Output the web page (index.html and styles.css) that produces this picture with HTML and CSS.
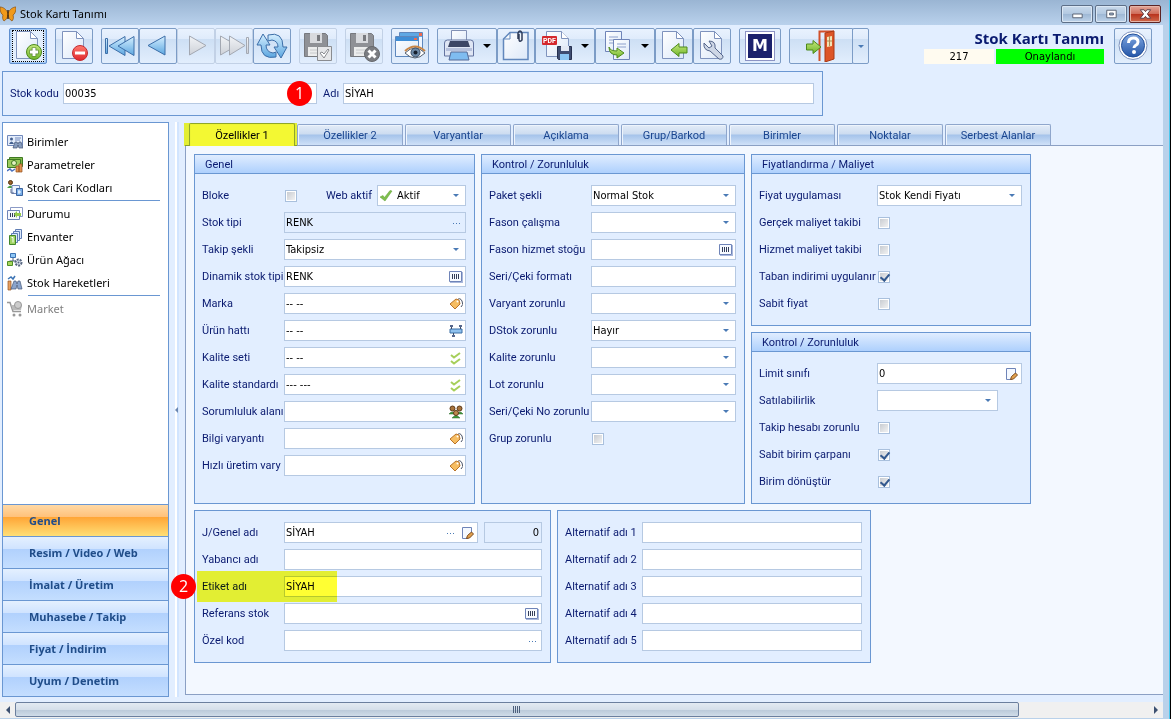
FILE: index.html
```html
<!DOCTYPE html>
<html lang="tr">
<head>
    <meta charset="UTF-8">
    <meta name="viewport" content="width=device-width, initial-scale=1.0">
    <title>Stok Kartı Tanımı</title>
    <link rel="stylesheet" href="styles.css">
</head>
<body>
    <!-- Shared icons -->
    <svg class="sprite" aria-hidden="true">
        <defs>
            <linearGradient id="gPage" x1="0" y1="0" x2="1" y2="1"><stop offset="0" stop-color="#fff"/><stop offset="1" stop-color="#dce8f8"/></linearGradient>
            <linearGradient id="gBlue" x1="0" y1="0" x2="0" y2="1"><stop offset="0" stop-color="#d5efff"/><stop offset="1" stop-color="#5ba6e0"/></linearGradient>
            <linearGradient id="gGray" x1="0" y1="0" x2="0" y2="1"><stop offset="0" stop-color="#f2f4f7"/><stop offset="1" stop-color="#cdd1d8"/></linearGradient>
            <linearGradient id="gGreen" x1="0" y1="0" x2="0" y2="1"><stop offset="0" stop-color="#c4e87c"/><stop offset="1" stop-color="#6fb52a"/></linearGradient>
            <linearGradient id="gRed" x1="0" y1="0" x2="0" y2="1"><stop offset="0" stop-color="#ff7a6e"/><stop offset="1" stop-color="#e0262c"/></linearGradient>
            <linearGradient id="gHelp" x1="0" y1="0" x2="0" y2="1"><stop offset="0" stop-color="#7fa6e0"/><stop offset="1" stop-color="#2456a8"/></linearGradient>
        </defs>
        <symbol id="page" viewBox="0 0 32 32">
            <path d="M4.500 1.500h14l7 7v20h-21z" fill="url(#gPage)" stroke="#7f93bd"/>
            <path d="M18.500 1.500v7h7z" fill="#fff" stroke="#7f93bd"/>
        </symbol>
        <symbol id="floppy" viewBox="0 0 32 32">
            <path d="M2.500 3.500h21l2 2v21h-23z" fill="#8f9196" stroke="#77797e"/>
            <path d="M8 3h12v10h-12z" fill="#d8dade"/><path d="M15 5h3v6h-3z" fill="#77797e"/>
            <path d="M6 17h16v9h-16z" fill="#eceded"/><path d="M8 20h12M8 23h12" stroke="#c8cacc"/>
        </symbol>
        <symbol id="barcode" viewBox="0 0 14 12">
            <path d="M.5 .5h12v10h-12z" fill="#f7faff" stroke="#6f84b8"/>
            <path d="M1 11.500h13M13.500 1v11" stroke="#a9b8dc"/>
            <path d="M3.500 3v5M5.500 3v5M7.500 3v5M9.500 3v5" stroke="#333d58"/>
        </symbol>
        <symbol id="tag" viewBox="0 0 14 14">
            <path d="M8 3q3-3 5 1t-1 6" fill="none" stroke="#4c5568"/>
            <path d="M1 7l6-5 3 1 1 4-5 5z" fill="#f6bd62" stroke="#b9742a"/>
            <circle cx="8.500" cy="4.500" r="1" fill="#fff"/>
        </symbol>
        <symbol id="line" viewBox="0 0 14 14">
            <path d="M1 5h12v4H1z" fill="#8fc1ee" stroke="#3b6ea5"/>
            <path d="M2.500 2v3M11.500 2v3M4.500 9v3" stroke="#3d4a66"/>
            <path d="M1 1h3v2H1zM10 1h3v2h-3zM3 11h3v2H3z" fill="#56678c"/>
        </symbol>
        <symbol id="checks" viewBox="0 0 14 14">
            <path d="M2 4l3 2.500L11 2M2 10l3 2.500L11 8" fill="none" stroke="#a6cf5a" stroke-width="2"/>
        </symbol>
        <symbol id="people" viewBox="0 0 14 14">
            <path d="M0 9q3-4 6 0zM8 9q3-4 6 0zM3 13q4-5 8 0z" fill="#3f9a3c" stroke="#2c6b2a" stroke-width=".5"/>
            <circle cx="3.500" cy="3.500" r="2.500" fill="#a8733c" stroke="#5d3a17"/>
            <circle cx="10.500" cy="3.500" r="2.500" fill="#a8733c" stroke="#5d3a17"/>
            <circle cx="7" cy="8" r="2.500" fill="#c08a50" stroke="#5d3a17"/>
        </symbol>
        <symbol id="edit" viewBox="0 0 14 14">
            <path d="M1.500 1.500h9v6l-4 5h-5z" fill="#f5f9ff" stroke="#6f84b8"/>
            <path d="M5.500 12.500l1-3 4-3.500 2 2-4 4z" fill="#e2a04c" stroke="#7a4a1e"/>
        </symbol>
        <symbol id="greenCheck" viewBox="0 0 14 14">
            <path d="M1 8l3-1.500 1.500 2L11 1.500l2 .5-7 10z" fill="#7fbf4d" stroke="#5c9c33" stroke-width=".5"/>
        </symbol>
    </svg>

    <div class="window">
        <header class="titlebar">
            <svg class="logo" viewBox="0 0 16 16">
                <path d="M8 7C6 3 3 1 0 1c0 4 1 7 3 8-1 3 0 5 1 6 2-1 4-4 4-6 0 2 2 5 4 6 1-1 2-3 1-6 2-1 3-4 3-8-3 0-6 2-8 6z" fill="#f09a1c" stroke="#8a4d0c" stroke-width=".7"/>
                <path d="M8 4v9" stroke="#4a2a0a" stroke-width="1.500"/>
            </svg>
            <span class="caption">Stok Kartı Tanımı</span>
            <div class="window-buttons">
                <button class="win-btn" aria-label="Simge durumuna küçült"><svg viewBox="0 0 30 17"><path d="M10.500 8.500h10v4h-10z" fill="#fff" stroke="#555f70"/></svg></button>
                <button class="win-btn" aria-label="Ekranı kapla"><svg viewBox="0 0 30 17"><path d="M10.500 4.500h10v8h-10z" fill="#fff" stroke="#555f70"/><path d="M13.500 7.500h4v2h-4z" fill="#9fb6d0" stroke="#555f70"/></svg></button>
                <button class="win-btn close" aria-label="Kapat"><svg viewBox="0 0 30 17"><path d="M10 4h4l1.500 2L17 4h4l-3.500 4.500L21 13h-4l-1.500-2-1.500 2h-4l3.500-4.500z" fill="#fff" stroke="#5a3a44"/></svg></button>
            </div>
        </header>

        <div class="toolbar">
            <div class="group">
                <button class="tool focused" aria-label="Yeni">
                    <svg viewBox="0 0 32 32"><use href="#page"/><circle cx="22" cy="22" r="7.500" fill="url(#gGreen)" stroke="#4d8a1c"/><path d="M22 17.500v9M17.500 22h9" stroke="#557f35" stroke-width="4.500"/><path d="M22 18v8M18 22h8" stroke="#fff" stroke-width="3"/></svg>
                </button>
            </div>
            <div class="group">
                <button class="tool" aria-label="Sil">
                    <svg viewBox="0 0 32 32"><use href="#page"/><circle cx="22" cy="23" r="7.500" fill="url(#gRed)" stroke="#c22a30"/><path d="M17 23h10" stroke="#fff" stroke-width="3"/></svg>
                </button>
            </div>
            <div class="group">
                <button class="tool" aria-label="İlk kayıt">
                    <svg viewBox="0 0 32 32"><g fill="url(#gBlue)" stroke="#3c6ea8"><path d="M1.500 8.500h2v15h-2z"/><path d="M5 16l16-9.500v19z"/><path d="M14 16l16-9.500v19z"/></g></svg>
                </button>
                <button class="tool" aria-label="Önceki kayıt">
                    <svg viewBox="0 0 32 32"><path d="M6 15.500l17-9.500v19z" fill="url(#gBlue)" stroke="#3c6ea8"/></svg>
                </button>
                <button class="tool off" aria-label="Sonraki kayıt">
                    <svg viewBox="0 0 32 32"><path d="M26 15.500L9.500 6v19z" fill="url(#gGray)" stroke="#a3a8b2"/></svg>
                </button>
                <button class="tool off" aria-label="Son kayıt">
                    <svg viewBox="0 0 32 32"><g fill="url(#gGray)" stroke="#a3a8b2"><path d="M19 15.500L2.500 6v19z"/><path d="M27 15.500L11.500 6v19z"/><path d="M28.500 7.500h2v16h-2z"/></g></svg>
                </button>
                <button class="tool" aria-label="Yenile">
                    <svg viewBox="0 0 32 32"><g fill="url(#gBlue)" stroke="#3c6ea8"><path d="M7 4l7 11h-4q0 7 7 8l3-1v5q-15 3-15-12H1z"/><path d="M25 28l-7-11h4q0-6-6-7l-4 1V5q15-4 15 12h4z"/></g></svg>
                </button>
            </div>
            <div class="group">
                <button class="tool off" aria-label="Kaydet">
                    <svg viewBox="0 0 32 32"><use href="#floppy"/><path d="M15.500 16.500h14v14h-14z" fill="#e6e7e9" stroke="#8a8c90"/><path d="M18 23l2-1 2 2 4-5 1 1-5 8z" fill="#fff" stroke="#8a8c90"/></svg>
                </button>
            </div>
            <div class="group">
                <button class="tool off" aria-label="Vazgeç">
                    <svg viewBox="0 0 32 32"><use href="#floppy"/><circle cx="24" cy="24" r="7.500" fill="#7b7d82" stroke="#66686c"/><path d="M20.500 20.500l7 7M27.500 20.500l-7 7" stroke="#fff" stroke-width="3"/></svg>
                </button>
            </div>
            <div class="group">
                <button class="tool" aria-label="İzle">
                    <svg viewBox="0 0 32 32"><path d="M5.500 2.500h23v19h-23z" fill="#eef5ff" stroke="#5d87bd"/><path d="M6 3h22v4H6z" fill="#5fa8e4"/><path d="M25 3h3v3h-3z" fill="#ef6a4d"/><path d="M1.500 6.500h23v20h-23z" fill="url(#gPage)" stroke="#5d87bd"/><path d="M2 7h22v4H2z" fill="#3f8ed6"/><path d="M20 8h3v2h-3z" fill="#ef6a4d"/><path d="M11 23q10-10 20 0-10 10-20 0z" fill="#fff" stroke="#54606f"/><path d="M11 21q10-9 20 0" fill="none" stroke="#c98544" stroke-width="2"/><circle cx="21.500" cy="22.500" r="4.500" fill="#6d8aa8" stroke="#3c5068"/><circle cx="21.500" cy="22.500" r="2" fill="#16202e"/></svg>
                </button>
            </div>
            <div class="group">
                <button class="tool with-arrow" aria-label="Yazdır">
                    <svg viewBox="0 0 32 32"><path d="M8.500 .5h15v14h-15z" fill="url(#gPage)" stroke="#8291b5"/><path d="M1.500 13q0-3 3-3h23q3 0 3 3v13h-29z" fill="#dfe6f4" stroke="#6474a0"/><path d="M7 11h18l2 6H5z" fill="#3c4665"/><path d="M3 18h26v3H3z" fill="#b6c1dc"/><path d="M8 22h16l2 8H6z" fill="#7fbcf0" stroke="#566b98"/></svg>
                    <span class="arrow"></span>
                </button>
                <button class="tool" aria-label="Ekler">
                    <svg viewBox="0 0 32 32"><path d="M10 2.500h18v27H3.500V9z" fill="url(#gPage)" stroke="#6288bd" stroke-width="1.500"/><path d="M10 2.500V9H3.500" fill="none" stroke="#6288bd"/><path d="M18 9V3q2-4 4 0v7q-3 3-3-1V4" fill="none" stroke="#2f3c58" stroke-width="1.500"/></svg>
                </button>
                <button class="tool with-arrow" aria-label="PDF kaydet">
                    <svg viewBox="0 0 32 32"><path d="M5.500 1.500h15l7 7v18h-22z" fill="url(#gPage)" stroke="#7f93bd"/><path d="M20.500 1.500v7h7" fill="#fff" stroke="#7f93bd"/><rect x="1" y="6" width="15" height="9" rx="1" fill="#d4282d"/><text x="2" y="13" class="pdf">PDF</text><path d="M16.500 16.500h14v13h-13l-1-1z" fill="#3f4d70" stroke="#27314f"/><path d="M20 16h8v5h-8z" fill="#e3e9f4"/><path d="M19 24h9v6h-9z" fill="#8cc6f2"/></svg>
                    <span class="arrow"></span>
                </button>
                <button class="tool with-arrow" aria-label="Kopyala">
                    <svg viewBox="0 0 32 32"><path d="M4.500 1.500h16v20h-16z" fill="url(#gPage)" stroke="#6f84b8"/><path d="M8 7h9M8 10h7M8 13h5" stroke="#8da0cc"/><path d="M12.500 9.500h16v20h-16z" fill="url(#gPage)" stroke="#6f84b8"/><path d="M16 14h9M16 17h9" stroke="#8da0cc"/><path d="M8 17q1 4 8 4v-3l7 5-7 5v-3q-8 0-8-8z" fill="url(#gGreen)" stroke="#4d8a1c"/></svg>
                    <span class="arrow"></span>
                </button>
                <button class="tool" aria-label="İçe aktar">
                    <svg viewBox="0 0 32 32"><use href="#page"/><path d="M13 20l8-6.500V17h8v6h-8v3.500z" fill="url(#gGreen)" stroke="#4d8a1c"/></svg>
                </button>
                <button class="tool" aria-label="Araçlar">
                    <svg viewBox="0 0 32 32"><use href="#page"/><path d="M8 13q-1 7 6 8l9 8q4 1 4-3l-8-8q1-7-6-7l3 5-3 2z" fill="#ced7e6" stroke="#56678c"/></svg>
                </button>
            </div>
            <div class="group">
                <button class="tool letter" aria-label="Market"><span>M</span></button>
            </div>
            <div class="group">
                <button class="tool exit" aria-label="Çıkış">
                    <svg viewBox="0 0 32 32"><path d="M14.500 31V1.500H29" fill="none" stroke="#d2502a" stroke-width="2"/><path d="M20 3l9-2v28l-9 3z" fill="#dd5527" stroke="#a83a16"/><path d="M22 7l5-1v10l-5 1z" fill="#f2e3b4"/><path d="M24.500 6v10M22 11h5" stroke="#b08a50"/><path d="M16 17l-8 6.500V20H1.500v-6H8v-3.500z" fill="url(#gGreen)" stroke="#4d8a1c"/></svg>
                </button>
                <button class="tool drop" aria-label="Çıkış seçenekleri"><span class="arrow small"></span></button>
            </div>
            <div class="status">
                <h1>Stok Kartı Tanımı</h1>
                <div class="status-row">
                    <span class="record-no">217</span>
                    <span class="approved">Onaylandı</span>
                </div>
            </div>
            <button class="tool" aria-label="Yardım">
                <svg viewBox="0 0 32 32"><circle cx="16" cy="15.500" r="14" fill="#fff" stroke="#7f93bd"/><circle cx="16" cy="15.500" r="11.500" fill="url(#gHelp)" stroke="#24509a"/><path d="M11.500 13q0-5 5-5 4.500 0 4.500 4 0 2-2.500 3.500Q17 16.500 17 18" fill="none" stroke="#fff" stroke-width="3"/><circle cx="17" cy="22" r="2" fill="#fff"/></svg>
            </button>
        </div>

        <div class="lookup">
            <label for="stokKodu" class="code-label">Stok kodu</label>
            <div class="field code"><input type="text" id="stokKodu" value="00035"><span class="badge first">1</span></div>
            <label for="adi" class="name-label">Adı</label>
            <div class="field"><input type="text" id="adi" value="SİYAH"></div>
        </div>

        <main class="main">
            <aside class="sidebar">
                <nav class="links">
                    <a href="#"><svg viewBox="0 0 16 16"><path d="M.5 1.500h15v10H.5z" fill="#e4edfb" stroke="#7088bb"/><circle cx="4.500" cy="5" r="1.500" fill="#44608f"/><path d="M2 10q2.500-5 5 0z" fill="#44608f"/><path d="M8 4h6M8 6h5" stroke="#7088bb"/><path d="M6 14l2-6h2l1 2 1-2h2l2 6h-4l-1-3-1 3z" fill="#879cbd" stroke="#465879" stroke-width=".7"/></svg>Birimler</a>
                    <a href="#"><svg viewBox="0 0 16 16"><path d="M2.500 .5h13v9h-13z" fill="#7fb84a" stroke="#3f7a22"/><path d="M.5 2.500h13v8H.5z" fill="#9ccc5e" stroke="#3f7a22"/><circle cx="7" cy="6" r="2.500" fill="#e3f2c0" stroke="#3f7a22"/><path d="M0 14l3-2 2 2 3-2" fill="none" stroke="#4a72c0" stroke-width="1.500"/><path d="M9 9h3v6H9zM12 7h3v8h-3z" fill="#e29350" stroke="#93501f" stroke-width=".7"/></svg>Parametreler</a>
                    <a href="#"><svg viewBox="0 0 16 16"><circle cx="3.500" cy="2.500" r="2" fill="#9a602c" stroke="#54330f"/><path d="M0 8q3.500-5 7 0z" fill="#4ba045"/><path d="M5 5.500h7.500v8H5z" fill="#eef4ff" stroke="#7088bb"/><path d="M4 9v4h3" fill="none" stroke="#5f6f90"/><path d="M9.500 8.500h6v7h-6z" fill="#79aee8" stroke="#3d649f"/><path d="M12 10v4M11 12h3" stroke="#fff"/></svg>Stok Cari Kodları</a>
                    <hr>
                    <a href="#"><svg viewBox="0 0 16 16"><path d="M3.500 1.500h12v9h-12z" fill="#fff" stroke="#8b9ac6"/><path d="M.5 4.500h12v9H.5z" fill="#f4f8ff" stroke="#6f84b8"/><path d="M3.500 7v4M5.500 7v4M7.500 7v4" stroke="#333d58"/><path d="M7 8l3-3v2h4v3h-4v2z" fill="#94cc4c"/></svg>Durumu</a>
                    <a href="#"><svg viewBox="0 0 16 16"><g fill="#dce9fb" stroke="#5f7db4"><path d="M8.500 .5h6v9h-6z"/><path d="M6.500 2.500h6v9h-6z"/><path d="M4.500 4.500h6v9h-6z"/></g><path d="M2.500 6.500h6v9h-6z" fill="#9fd362" stroke="#43872a"/><path d="M4.500 8.500h1.500v5" fill="none" stroke="#fff"/></svg>Envanter</a>
                    <a href="#"><svg viewBox="0 0 16 16"><path d="M3.500 1.500h5v4h-5z" fill="#8ec6f5" stroke="#3b73b4"/><path d="M6 6v3M2.500 9h7" stroke="#4d5c78"/><path d="M.5 9.500h5v4h-5z" fill="#a8d65e" stroke="#4f8e26"/><circle cx="11.500" cy="10.500" r="3" fill="#dfe5f0" stroke="#56657f" stroke-width="2" stroke-dasharray="2 1"/><circle cx="11.500" cy="10.500" r="1" fill="#56657f"/></svg>Ürün Ağacı</a>
                    <a href="#"><svg viewBox="0 0 16 16"><path d="M1 4l3-2 2 2 2-3" fill="none" stroke="#3b73b4" stroke-width="1.500"/><path d="M1 6h3v9H1z" fill="#e8a060" stroke="#93501f" stroke-width=".7"/><path d="M4 14l3-8h2l1 3 1-3h2l2 8h-4l-1-4-1 4z" fill="#8aa4cc" stroke="#465879" stroke-width=".7"/></svg>Stok Hareketleri</a>
                    <hr>
                    <a href="#" class="muted"><svg viewBox="0 0 16 16"><path d="M0 1.500h3l3 9h8" fill="none" stroke="#999" stroke-width="1.500"/><path d="M4 4h11l-1 5H6z" fill="#bbb"/><circle cx="11" cy="4" r="3.500" fill="#ccc" stroke="#999"/><circle cx="7" cy="14" r="1.500" fill="#999"/><circle cx="13" cy="14" r="1.500" fill="#999"/></svg>Market</a>
                </nav>
                <div class="sections">
                    <button class="selected">Genel</button>
                    <button>Resim / Video / Web</button>
                    <button>İmalat / Üretim</button>
                    <button>Muhasebe / Takip</button>
                    <button>Fiyat / İndirim</button>
                    <button>Uyum / Denetim</button>
                </div>
            </aside>

            <div class="splitter"></div>

            <section class="content">
                <div class="tabs">
                    <button class="tab active">Özellikler 1</button>
                    <button class="tab">Özellikler 2</button>
                    <button class="tab">Varyantlar</button>
                    <button class="tab">Açıklama</button>
                    <button class="tab">Grup/Barkod</button>
                    <button class="tab">Birimler</button>
                    <button class="tab">Noktalar</button>
                    <button class="tab">Serbest Alanlar</button>
                </div>

                <div class="tab-body">
                    <div class="panels">
                        <div class="panel general">
                            <h2>Genel</h2>
                            <div class="form">
                                <div class="row">
                                    <label for="bloke">Bloke</label>
                                    <input type="checkbox" id="bloke">
                                    <label for="webAktif" class="inline">Web aktif</label>
                                    <div class="field select web"><svg class="lead"><use href="#greenCheck"/></svg><select id="webAktif"><option>Aktif</option></select></div>
                                </div>
                                <div class="row"><label for="stokTipi">Stok tipi</label><div class="field readonly"><input type="text" id="stokTipi" value="RENK" readonly><button class="dots" aria-label="Seç"></button></div></div>
                                <div class="row"><label for="takip">Takip şekli</label><div class="field select"><select id="takip"><option>Takipsiz</option></select></div></div>
                                <div class="row"><label for="dinamik">Dinamik stok tipi</label><div class="field"><input type="text" id="dinamik" value="RENK"><button class="pick" aria-label="Seç"><svg><use href="#barcode"/></svg></button></div></div>
                                <div class="row"><label for="marka">Marka</label><div class="field"><input type="text" id="marka" value="-- --"><button class="pick" aria-label="Seç"><svg><use href="#tag"/></svg></button></div></div>
                                <div class="row"><label for="urunHatti">Ürün hattı</label><div class="field"><input type="text" id="urunHatti" value="-- --"><button class="pick" aria-label="Seç"><svg><use href="#line"/></svg></button></div></div>
                                <div class="row"><label for="kaliteSeti">Kalite seti</label><div class="field"><input type="text" id="kaliteSeti" value="-- --"><button class="pick" aria-label="Seç"><svg><use href="#checks"/></svg></button></div></div>
                                <div class="row"><label for="kaliteStd">Kalite standardı</label><div class="field"><input type="text" id="kaliteStd" value="--- ---"><button class="pick" aria-label="Seç"><svg><use href="#checks"/></svg></button></div></div>
                                <div class="row"><label for="sorumluluk">Sorumluluk alanı</label><div class="field"><input type="text" id="sorumluluk"><button class="pick" aria-label="Seç"><svg><use href="#people"/></svg></button></div></div>
                                <div class="row"><label for="bilgi">Bilgi varyantı</label><div class="field"><input type="text" id="bilgi"><button class="pick" aria-label="Seç"><svg><use href="#tag"/></svg></button></div></div>
                                <div class="row"><label for="hizli">Hızlı üretim vary</label><div class="field"><input type="text" id="hizli"><button class="pick" aria-label="Seç"><svg><use href="#tag"/></svg></button></div></div>
                            </div>
                        </div>

                        <div class="panel control">
                            <h2>Kontrol / Zorunluluk</h2>
                            <div class="form">
                                <div class="row"><label for="paket">Paket şekli</label><div class="field select"><select id="paket"><option>Normal Stok</option></select></div></div>
                                <div class="row"><label for="fason">Fason çalışma</label><div class="field select"><select id="fason"><option></option></select></div></div>
                                <div class="row"><label for="fasonStok">Fason hizmet stoğu</label><div class="field"><input type="text" id="fasonStok"><button class="pick" aria-label="Seç"><svg><use href="#barcode"/></svg></button></div></div>
                                <div class="row"><label for="seriFormat">Seri/Çeki formatı</label><div class="field"><input type="text" id="seriFormat"></div></div>
                                <div class="row"><label for="varyant">Varyant zorunlu</label><div class="field select"><select id="varyant"><option></option></select></div></div>
                                <div class="row"><label for="dstok">DStok zorunlu</label><div class="field select"><select id="dstok"><option>Hayır</option></select></div></div>
                                <div class="row"><label for="kalite">Kalite zorunlu</label><div class="field select"><select id="kalite"><option></option></select></div></div>
                                <div class="row"><label for="lot">Lot zorunlu</label><div class="field select"><select id="lot"><option></option></select></div></div>
                                <div class="row"><label for="seriNo">Seri/Çeki No zorunlu</label><div class="field select"><select id="seriNo"><option></option></select></div></div>
                                <div class="row"><label for="grup">Grup zorunlu</label><input type="checkbox" id="grup"></div>
                            </div>
                        </div>

                        <div class="stack">
                            <div class="panel pricing">
                                <h2>Fiyatlandırma / Maliyet</h2>
                                <div class="form">
                                    <div class="row"><label for="fiyat">Fiyat uygulaması</label><div class="field select"><select id="fiyat"><option>Stok Kendi Fiyatı</option></select></div></div>
                                    <div class="row"><label for="gercek">Gerçek maliyet takibi</label><input type="checkbox" id="gercek"></div>
                                    <div class="row"><label for="hizmet">Hizmet maliyet takibi</label><input type="checkbox" id="hizmet"></div>
                                    <div class="row"><label for="taban">Taban indirimi uygulanır</label><input type="checkbox" id="taban" checked></div>
                                    <div class="row"><label for="sabitFiyat">Sabit fiyat</label><input type="checkbox" id="sabitFiyat"></div>
                                </div>
                            </div>
                            <div class="panel pricing">
                                <h2>Kontrol / Zorunluluk</h2>
                                <div class="form">
                                    <div class="row"><label for="limit">Limit sınıfı</label><div class="field"><input type="text" id="limit" value="0"><button class="pick" aria-label="Düzenle"><svg><use href="#edit"/></svg></button></div></div>
                                    <div class="row"><label for="satilabilir">Satılabilirlik</label><div class="field select short"><select id="satilabilir"><option></option></select></div></div>
                                    <div class="row"><label for="hesap">Takip hesabı zorunlu</label><input type="checkbox" id="hesap"></div>
                                    <div class="row"><label for="carpan">Sabit birim çarpanı</label><input type="checkbox" id="carpan" checked></div>
                                    <div class="row"><label for="donustur">Birim dönüştür</label><input type="checkbox" id="donustur" checked></div>
                                </div>
                            </div>
                        </div>
                    </div>

                    <div class="panels">
                        <div class="panel names">
                            <div class="form">
                                <div class="row"><label for="genelAdi">J/Genel adı</label><div class="field"><input type="text" id="genelAdi" value="SİYAH"><button class="dots" aria-label="Seç"></button><button class="pick" aria-label="Düzenle"><svg><use href="#edit"/></svg></button></div><div class="field readonly count"><input type="text" value="0" aria-label="Adet" readonly></div></div>
                                <div class="row"><label for="yabanci">Yabancı adı</label><div class="field"><input type="text" id="yabanci"></div></div>
                                <div class="row marked"><label for="etiket">Etiket adı</label><div class="field"><input type="text" id="etiket" value="SİYAH"></div><span class="badge second">2</span></div>
                                <div class="row"><label for="referans">Referans stok</label><div class="field"><input type="text" id="referans"><button class="pick" aria-label="Seç"><svg><use href="#barcode"/></svg></button></div></div>
                                <div class="row"><label for="ozelKod">Özel kod</label><div class="field"><input type="text" id="ozelKod"><button class="dots" aria-label="Seç"></button></div></div>
                            </div>
                        </div>
                        <div class="panel alternates">
                            <div class="form">
                                <div class="row"><label for="alt1">Alternatif adı 1</label><div class="field"><input type="text" id="alt1"></div></div>
                                <div class="row"><label for="alt2">Alternatif adı 2</label><div class="field"><input type="text" id="alt2"></div></div>
                                <div class="row"><label for="alt3">Alternatif adı 3</label><div class="field"><input type="text" id="alt3"></div></div>
                                <div class="row"><label for="alt4">Alternatif adı 4</label><div class="field"><input type="text" id="alt4"></div></div>
                                <div class="row"><label for="alt5">Alternatif adı 5</label><div class="field"><input type="text" id="alt5"></div></div>
                            </div>
                        </div>
                    </div>
                </div>
            </section>
        </main>

        <div class="scrollbar">
            <button class="scroll-left" aria-label="Sola kaydır"></button>
            <div class="track"><div class="thumb"><span class="grip"></span></div></div>
            <button class="scroll-right" aria-label="Sağa kaydır"></button>
        </div>
    </div>
</body>
</html>
```
FILE: styles.css
```css
* {
    box-sizing: border-box;
}
body {
    margin: 0;
    font-family: Roboto, sans-serif;
    font-size: 11px;
    color: #0a1a70;
    background: #e2eeff;
    border-right: 1px solid #000;
}
button, input, select {
    font: inherit;
    color: inherit;
    margin: 0;
    padding: 0;
    border: 0;
    border-radius: 0;
    background: none;
}
h1, h2 {
    margin: 0;
    font-weight: normal;
}
.sprite {
    position: absolute;
    width: 0;
    height: 0;
}
.window {
    display: flex;
    flex-direction: column;
    min-height: 100vh;
    padding-right: 6px;
    border-right: 1px solid #4cc8ee;
    background: linear-gradient(to right, #e2eeff calc(100% - 6px), #b9d1ea calc(100% - 6px));
}

/* Title bar */
.titlebar {
    display: flex;
    align-items: center;
    height: 25px;
    margin-right: -6px;
    padding: 2px 8px 0 0;
    background: linear-gradient(#9ab5d3, #b9d1ec);
    color: #000;
    font-family: "Noto Sans", sans-serif;
}
.logo {
    width: 16px;
    height: 16px;
    margin-right: 4px;
}
.window-buttons {
    display: flex;
    gap: 2px;
    margin-left: auto;
}
.win-btn {
    width: 32px;
    height: 18px;
    border: 1px solid #5d6f88;
    border-radius: 2px;
    background: linear-gradient(#c9daec, #b2c8e0 50%, #9db7d4 50%, #bdd3ea);
    box-shadow: inset 0 0 0 1px #dbe7f4;
}
.win-btn svg {
    display: block;
    width: 30px;
    height: 16px;
}
.win-btn.close {
    border-color: #5c2424;
    background: linear-gradient(#e3a699, #cf6b58 50%, #b8311c 50%, #cf6a4c);
    box-shadow: inset 0 0 0 1px #e6b5a8;
}

/* Toolbar */
.toolbar {
    display: flex;
    align-items: flex-start;
    height: 46px;
    padding: 3px 11px 0 9px;
}
.group {
    display: flex;
    margin-right: 8px;
}
.tool {
    display: flex;
    flex: none;
    align-items: center;
    justify-content: center;
    width: 38px;
    height: 36px;
    border: 1px solid #7c9cc6;
    border-radius: 2px;
    background: linear-gradient(#e9f2fe, #dfebfb 30%, #cddff4 30%, #e2eefd);
}
.tool svg {
    width: 32px;
    height: 32px;
}
.tool.focused {
    border-color: #5f8fcf;
    background: #c5dcf8;
    box-shadow: inset 0 0 0 1px #a8cbf3;
}
.tool.focused svg {
    outline: 1px dotted #000;
    outline-offset: -1px;
    background: #e2eefd;
}
.tool.off {
    border-color: #c2d1e6;
}
.tool.with-arrow {
    width: 60px;
    gap: 8px;
}
.tool.letter {
    width: 42px;
}
.letter span {
    width: 30px;
    height: 30px;
    border: 1px solid #8c93c4;
    background: #1b216c;
    box-shadow: inset 0 0 0 2px #fff;
    color: #fff;
    font-family: "DejaVu Sans", sans-serif;
    font-size: 16px;
    font-weight: bold;
    line-height: 28px;
}
.tool.exit {
    width: 64px;
    border-radius: 2px 0 0 2px;
}
.tool.drop {
    width: 17px;
    margin-left: -1px;
}
.arrow {
    border: 4px solid transparent;
    border-top-color: #000;
    border-bottom: 0;
}
.arrow.small {
    border-width: 3px 3px 0;
    border-top-color: #4a7ab5;
}
.pdf {
    fill: #fff;
    font-size: 7px;
    font-weight: bold;
}
.status {
    display: flex;
    flex-direction: column;
    width: 180px;
    margin-left: auto;
    margin-right: 10px;
}
.status h1 {
    height: 21px;
    font-family: "Open Sans", sans-serif;
    font-size: 15px;
    font-weight: bold;
    line-height: 21px;
    text-align: right;
    white-space: nowrap;
}
.status-row {
    display: flex;
    gap: 2px;
    color: #000;
    font-family: "DejaVu Sans", sans-serif;
    font-size: 10px;
    line-height: 15px;
    text-align: center;
}
.record-no {
    width: 70px;
    background: #fffbf0;
}
.approved {
    flex: 1;
    background: #0f0;
}

/* Stock code lookup */
.lookup {
    display: flex;
    align-items: center;
    max-width: 821px;
    height: 45px;
    margin-left: 2px;
    padding: 0 8px 0 7px;
    border: 1px solid #6a97d2;
}
.code-label {
    width: 53px;
}
.name-label {
    width: 20px;
}
.lookup .code {
    flex: none;
    position: relative;
    width: 254px;
    margin-right: 6px;
}

/* Fields */
.field {
    display: flex;
    flex: 1;
    align-items: center;
    min-width: 0;
    height: 21px;
    border: 1px solid #b6c9e2;
    background: #fff;
    color: #000;
    font-family: "DejaVu Sans Condensed", "DejaVu Sans", sans-serif;
}
.field input {
    flex: 1;
    min-width: 0;
    height: 19px;
    padding-left: 1px;
    outline: 0;
}
.field select {
    flex: 1;
    min-width: 0;
    height: 19px;
    padding-left: 1px;
    appearance: none;
    outline: 0;
}
.field.select::after {
    content: "";
    margin: 0 6px 0 3px;
    border: 3px solid transparent;
    border-top-color: #4a7ab5;
    border-bottom: 0;
    pointer-events: none;
}
.field.readonly {
    background: #e2eeff;
}
.field.web {
    flex: none;
    width: 89px;
}
.field.short {
    flex: none;
    width: 121px;
}
.field.count {
    flex: none;
    width: 58px;
    margin-left: 6px;
}
.field.count input {
    padding-right: 2px;
    text-align: right;
}
.lead {
    width: 14px;
    height: 14px;
    margin: 0 3px 0 1px;
}
.pick {
    width: 14px;
    height: 14px;
    margin-right: 2px;
}
.pick svg {
    display: block;
    width: 14px;
    height: 14px;
}
.dots {
    width: 16px;
    height: 16px;
    background: linear-gradient(to right, #4a7ab5 1px, transparent 1px) 4px 8px / 3px 1px repeat-x;
    background-clip: content-box;
    padding: 0 4px;
}
.dots + .pick {
    margin-left: 2px;
}
input[type="checkbox"] {
    width: 12px;
    height: 12px;
    margin: 1px 0 0 1px;
    border: 1px solid #a9c0dd;
    background: linear-gradient(135deg, #c4c8ce, #f6f6f6);
    box-shadow: inset 0 0 0 1px #fff;
    appearance: none;
}
input[type="checkbox"]:checked::before {
    content: "";
    display: block;
    width: 4px;
    height: 7px;
    margin: 0 0 0 3px;
    border: solid #33598f;
    border-width: 0 2px 2px 0;
    transform: rotate(40deg);
}

/* Sidebar */
.main {
    display: flex;
    flex: 1;
    margin: 6px 0 5px 2px;
}
.sidebar {
    display: flex;
    flex: none;
    flex-direction: column;
    width: 167px;
    border: 1px solid #6a97d2;
    background: #fff;
}
.links {
    display: flex;
    flex: 1;
    flex-direction: column;
    padding: 7px 8px 0 4px;
    font-family: "Noto Sans", sans-serif;
}
.links a {
    display: flex;
    align-items: center;
    gap: 4px;
    height: 23px;
    color: #000;
    text-decoration: none;
    white-space: nowrap;
}
.links a svg {
    width: 16px;
    height: 16px;
}
.links a.muted {
    color: #808080;
}
.links hr {
    width: 132px;
    height: 1px;
    margin: 1px 0 1px 21px;
    border: 0;
    background: #6a97d2;
}
.sections button {
    display: block;
    width: 100%;
    height: 32px;
    padding-left: 26px;
    border-top: 1px solid #6a97d2;
    background: linear-gradient(#e4f0ff, #cfe3ff 40%, #b1d1fd 40%, #c4deff);
    color: #204d89;
    font-family: "Open Sans", sans-serif;
    font-weight: bold;
    text-align: left;
}
.sections .selected {
    background: linear-gradient(#ffd9a5, #ffc078 40%, #ffa637 40%, #ffdf76);
}
.splitter {
    display: flex;
    flex: none;
    align-items: center;
    width: 16px;
    padding-left: 6px;
    background: linear-gradient(to right, transparent 6px, #fff 6px, #fff 8px, #d2e5ff 8px, #d2e5ff 10px, transparent 10px);
}
.splitter::after {
    content: "";
    border: 3px solid transparent;
    border-right-color: #6a86b0;
    border-left: 0;
}

/* Tabs */
.content {
    display: flex;
    flex: 1;
    flex-direction: column;
    min-width: 0;
    margin-bottom: 2px;
}
.tabs {
    position: relative;
    display: flex;
    gap: 2px;
    height: 24px;
    padding: 2px 0 0 4px;
    border-bottom: 1px solid #8ba0c4;
}
.tabs::after {
    content: "";
    position: absolute;
    top: 1px;
    left: -1px;
    width: 113px;
    height: 23px;
    background: #ffff33;
    mix-blend-mode: multiply;
    pointer-events: none;
}
.tab {
    width: 106px;
    height: 21px;
    border: 1px solid #8fa6cc;
    border-bottom: 0;
    border-radius: 2px 2px 0 0;
    background: linear-gradient(#e3ecf8, #cddcf0 45%, #a5c3ea 50%, #cfe1f8);
    box-shadow: inset 1px 1px 0 #eef4fc;
    color: #1a458f;
}
.tab.active {
    height: 23px;
    margin-top: -1px;
    background: #f3f8ff;
    color: #000;
}
.tab-body {
    display: flex;
    flex: 1;
    flex-direction: column;
    gap: 6px;
    padding: 8px;
    border: 1px solid #8ba0c4;
    border-top: 0;
    border-right: 0;
    background: #f3f8ff;
}

/* Panels */
.panels {
    display: flex;
    gap: 6px;
}
.stack {
    display: flex;
    flex-direction: column;
    gap: 6px;
}
.panel {
    flex: none;
    border: 1px solid #6a97d2;
    background: #e2eeff;
}
.panel h2 {
    height: 19px;
    padding-left: 10px;
    border-bottom: 1px solid #6a97d2;
    background: linear-gradient(#e0edff, #aed0fd);
    font-size: 11px;
    line-height: 19px;
}
.general {
    width: 281px;
}
.control {
    width: 264px;
}
.pricing {
    width: 280px;
}
.names {
    width: 357px;
}
.alternates {
    width: 314px;
}
.form {
    display: flex;
    flex-direction: column;
    gap: 6px;
    padding: 11px 8px 11px 7px;
}
.row {
    display: flex;
    align-items: center;
    height: 21px;
}
.row label {
    flex: none;
    width: 82px;
    white-space: nowrap;
}
.control .row label {
    width: 102px;
}
.pricing .row label {
    width: 118px;
}
.alternates .row label {
    width: 77px;
}
.row label.inline {
    width: auto;
    margin: 0 5px 0 auto;
}

/* Highlight and step numbers */
.row.marked {
    position: relative;
}
.row.marked::before {
    content: "";
    position: absolute;
    z-index: 1;
    top: -5px;
    left: -5px;
    width: 140px;
    height: 31px;
    background: #ffff33;
    mix-blend-mode: multiply;
    pointer-events: none;
}
.badge {
    position: absolute;
    z-index: 2;
    width: 25px;
    height: 25px;
    border-radius: 50%;
    background: #f00;
    color: #fff;
    font-family: "Open Sans", sans-serif;
    font-size: 16px;
    line-height: 25px;
    text-align: center;
}
.badge.first {
    top: -3px;
    right: 4px;
}
.badge.second {
    top: -2px;
    left: -31px;
}

/* Horizontal scroll bar */
.scrollbar {
    display: flex;
    height: 17px;
    border-bottom: 1px solid #b9d1ea;
    background: #f0f0f0;
}
.scrollbar button {
    display: flex;
    align-items: center;
    justify-content: center;
    flex: none;
    width: 15px;
}
.scrollbar button::before {
    content: "";
    border: 4px solid transparent;
}
.scrollbar .scroll-left::before {
    border-right-color: #3c5070;
    border-left: 0;
}
.scrollbar .scroll-right::before {
    border-left-color: #3c5070;
    border-right: 0;
}
.track {
    flex: 1;
}
.thumb {
    display: flex;
    align-items: center;
    justify-content: center;
    width: 88.6%;
    height: 15px;
    border: 1px solid #6b7f9e;
    border-radius: 2px;
    background: linear-gradient(#e3eaf2, #d5dfea 50%, #b9c8d8 50%, #d0dce8);
}
.grip {
    width: 8px;
    height: 7px;
    background: repeating-linear-gradient(to right, #4c5f7c 0, #4c5f7c 1px, transparent 1px, transparent 2px);
}
```
